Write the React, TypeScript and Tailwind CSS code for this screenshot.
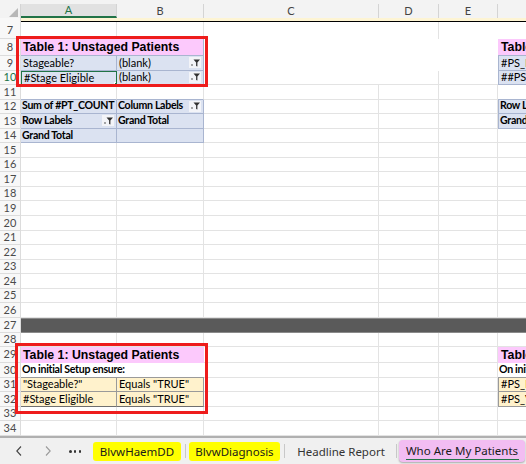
import React from 'react';

const cellFont = "font-['Lato','Liberation_Sans',sans-serif]";
const grid = 'shrink-0 border-r border-b border-[#e3e3e3]';
const A = 'w-[96px]';
const B = 'w-[87px]';
const C = 'w-[175px]';
const D = 'w-[60px]';
const E = 'w-[59px]';

// pivot / table styles
const piv = 'bg-[#dbe2f1] border-r border-b border-[#a9b5d0]';
const tan = 'bg-[#fff2cc] border-r border-b border-[#9a9a9a]';
const pink = 'bg-[#fcc9fc]';

const txt = `flex items-center overflow-hidden whitespace-nowrap pl-[2px] text-[11px] text-black ${cellFont}`;
const txtB = `flex items-center overflow-hidden whitespace-nowrap pl-[1px] text-[10.6px] font-bold tracking-[-0.3px] text-black ${cellFont}`;
const title = "flex items-center overflow-hidden whitespace-nowrap pl-[2px] text-[12.3px] font-bold text-black font-['Liberation_Sans',Arial,sans-serif]";

function FilterIcon() {
  return (
    <span className="ml-auto mr-[2px] flex h-[11px] w-[12px] shrink-0 items-center justify-center bg-[#f3f4f8]">
      <svg width="11" height="10" viewBox="0 0 11 10">
        <path d="M3.5 1.5 H10 L7.4 4.6 V8.6 L6.1 8 V4.6 Z" fill="#333" />
        <rect x="1" y="6.5" width="2" height="1" fill="#555" />
      </svg>
    </span>
  );
}

function Row({
  n,
  h,
  active,
  children,
}: {
  n: number;
  h: string;
  active?: boolean;
  children: React.ReactNode;
}) {
  return (
    <div className={`flex ${h}`}>
      <div
        className={`flex w-[21px] shrink-0 items-center justify-center border-r border-b border-[#dcdcdc] bg-[#f8f8f8] text-[11px] ${cellFont} ${
          active ? 'text-[#217346]' : 'text-[#4a4a4a]'
        }`}
      >
        {n}
      </div>
      {children}
    </div>
  );
}

function Blank({ n, h }: { n: number; h: string }) {
  return (
    <Row n={n} h={h}>
      <div className={`${grid} ${A}`} />
      <div className={`${grid} ${B}`} />
      <div className={`${grid} ${C}`} />
      <div className={`${grid} ${D}`} />
      <div className={`${grid} ${E}`} />
      <div className="min-w-0 flex-1 border-b border-[#e3e3e3]" />
    </Row>
  );
}

// column F is cut by the window edge, as in the sheet
function FCell({ text, cls, isBold }: { text: string; cls: string; isBold?: boolean }) {
  return <div className={`min-w-0 flex-1 ${isBold ? txtB : txt} ${cls}`}>{text}</div>;
}

const R = 'h-[14.56px]';

export default function App() {
  return (
    <div className="relative h-[464px] w-[526px] overflow-hidden bg-white">
      {/* column headers */}
      <div className="h-[4px] bg-[#f3f3f3]" />
      <div className={`flex h-[14px] text-[11px] ${cellFont}`}>
        <div className="relative w-[21px] shrink-0 border-r border-[#d4d4d4] bg-[#f3f3f3]">
          <div className="absolute bottom-[1px] right-[2px] h-0 w-0 border-b-[9px] border-l-[9px] border-b-[#b8b8b8] border-l-transparent" />
        </div>
        <div className="flex w-[96px] shrink-0 items-center justify-center border-r border-b-2 border-r-[#d4d4d4] border-b-[#217346] bg-[#e1e1e1] text-[#217346]">
          A
        </div>
        <div className="flex w-[87px] shrink-0 items-center justify-center border-r border-[#d4d4d4] bg-[#f3f3f3] text-[#444]">B</div>
        <div className="flex w-[175px] shrink-0 items-center justify-center border-r border-[#d4d4d4] bg-[#f3f3f3] text-[#444]">C</div>
        <div className="flex w-[60px] shrink-0 items-center justify-center border-r border-[#d4d4d4] bg-[#f3f3f3] text-[#444]">D</div>
        <div className="flex w-[59px] shrink-0 items-center justify-center border-r border-[#d4d4d4] bg-[#f3f3f3] text-[#444]">E</div>
        <div className="flex-1 bg-[#f3f3f3]" />
      </div>
      {/* frozen pane strip */}
      <div className="flex h-[4px]">
        <div className="w-[21px] shrink-0 border-r border-[#d4d4d4] bg-[#f8f8f8]" />
        <div className="flex-1 border-b border-black bg-[#fdf4d3]" />
      </div>

      {/* row 7 */}
      <Row n={7} h="h-[17px]">
        <div className={`${grid} ${A} border-b-[#a9b5d0]`} />
        <div className={`${grid} ${B} border-b-[#a9b5d0]`} />
        <div className={`shrink-0 ${C}`} />
        <div className={`shrink-0 border-r border-[#e3e3e3] ${D}`} />
        <div className={`shrink-0 ${E}`} />
        <div className="min-w-0 flex-1" />
      </Row>
      {/* row 8 */}
      <Row n={8} h="h-[17px]">
        <div className={`shrink-0 w-[183px] border-r border-b border-[#a9b5d0] ${pink} ${title}`}>Table 1: Unstaged Patients</div>
        <div className={`shrink-0 ${C}`} />
        <div className={`shrink-0 ${D}`} />
        <div className={`shrink-0 ${E}`} />
        <div className={`min-w-0 flex-1 border-b border-[#a9b5d0] ${pink} ${title} pl-[3px]`}>Table 1</div>
      </Row>
      {/* row 9 */}
      <Row n={9} h={R}>
        <div className={`shrink-0 ${A} ${piv} ${txt}`}>Stageable?</div>
        <div className={`shrink-0 ${B} ${piv} ${txt}`}>
          (blank)
          <FilterIcon />
        </div>
        <div className={`shrink-0 ${C}`} />
        <div className={`shrink-0 ${D}`} />
        <div className={`shrink-0 ${E}`} />
        <FCell text="#PS_PATIENT" cls="border-l border-b border-[#a9b5d0] bg-[#dbe2f1]" />
      </Row>
      {/* row 10 */}
      <Row n={10} h={R} active>
        <div className={`relative shrink-0 ${A} bg-[#dbe2f1] ${txt} border-[1.5px] border-[#217346]`}>
          #Stage Eligible
          <span className="absolute -bottom-[3px] -right-[3px] h-[5px] w-[5px] border border-white bg-[#217346]" />
        </div>
        <div className={`shrink-0 ${B} ${piv} ${txt}`}>
          (blank)
          <FilterIcon />
        </div>
        <div className={`shrink-0 border-b border-[#e3e3e3] ${C}`} />
        <div className={`shrink-0 border-r border-b border-[#e3e3e3] ${D}`} />
        <div className={`shrink-0 border-b border-[#e3e3e3] ${E}`} />
        <FCell text="##PS_VALID" cls="border-l border-b border-[#a9b5d0] bg-[#dbe2f1]" />
      </Row>
      {/* row 11 */}
      <Row n={11} h={R}>
        <div className={`${grid} ${A} border-b-[#a9b5d0]`} />
        <div className={`${grid} ${B} border-b-[#a9b5d0]`} />
        <div className={`${grid} ${C}`} />
        <div className={`${grid} ${D}`} />
        <div className={`${grid} ${E}`} />
        <div className="min-w-0 flex-1 border-b border-[#a9b5d0]" />
      </Row>
      {/* pivot */}
      <Row n={12} h={R}>
        <div className={`shrink-0 ${A} ${piv} ${txtB}`}>Sum of #PT_COUNT</div>
        <div className={`shrink-0 ${B} ${piv} ${txtB}`}>
          Column Labels
          <FilterIcon />
        </div>
        <div className={`${grid} ${C}`} />
        <div className={`${grid} ${D}`} />
        <div className={`${grid} ${E}`} />
        <FCell text="Row Labels" isBold cls="border-l border-b border-[#a9b5d0] bg-[#dbe2f1]" />
      </Row>
      <Row n={13} h={R}>
        <div className={`shrink-0 ${A} ${piv} ${txtB}`}>
          Row Labels
          <FilterIcon />
        </div>
        <div className={`shrink-0 ${B} ${piv} ${txtB}`}>Grand Total</div>
        <div className={`${grid} ${C}`} />
        <div className={`${grid} ${D}`} />
        <div className={`${grid} ${E}`} />
        <FCell text="Grand Total" isBold cls="border-l border-b border-[#a9b5d0] bg-[#dbe2f1]" />
      </Row>
      <Row n={14} h={R}>
        <div className={`shrink-0 ${A} ${piv} ${txtB}`}>Grand Total</div>
        <div className={`shrink-0 ${B} ${piv}`} />
        <div className={`${grid} ${C}`} />
        <div className={`${grid} ${D}`} />
        <div className={`${grid} ${E}`} />
        <div className="min-w-0 flex-1 border-b border-[#e3e3e3]" />
      </Row>
      {[15, 16, 17, 18, 19, 20, 21, 22, 23, 24, 25, 26].map((n) => (
        <Blank key={n} n={n} h={R} />
      ))}
      {/* row 27 dark band */}
      <Row n={27} h="h-[15px]">
        <div className="flex-1 border-y border-[#8a8a8a] bg-[#5a5a5a]" />
      </Row>
      <Blank n={28} h="h-[14px]" />
      <Row n={29} h="h-[16px]">
        <div className={`shrink-0 w-[183px] ${pink} ${title}`}>Table 1: Unstaged Patients</div>
        <div className={`${grid} ${C}`} />
        <div className={`${grid} ${D}`} />
        <div className={`${grid} ${E}`} />
        <div className={`min-w-0 flex-1 ${pink} ${title} pl-[3px]`}>Table 2</div>
      </Row>
      <Row n={30} h="h-[15px]">
        <div className={`shrink-0 w-[183px] border-b border-[#9a9a9a] ${txtB}`}>On initial Setup ensure:</div>
        <div className={`${grid} ${C}`} />
        <div className={`${grid} ${D}`} />
        <div className={`${grid} ${E}`} />
        <FCell text="On initial" isBold cls="border-b border-[#9a9a9a]" />
      </Row>
      <Row n={31} h="h-[14.5px]">
        <div className={`shrink-0 ${A} ${tan} ${txt}`}>"Stageable?"</div>
        <div className={`shrink-0 ${B} ${tan} ${txt}`}>Equals "TRUE"</div>
        <div className={`${grid} ${C}`} />
        <div className={`${grid} ${D}`} />
        <div className={`${grid} ${E}`} />
        <FCell text="#PS_PATIENT" cls="border-l border-b border-[#9a9a9a] bg-[#fff2cc]" />
      </Row>
      <Row n={32} h="h-[14.5px]">
        <div className={`shrink-0 ${A} ${tan} border-b-[#6f6f6f] ${txt}`}>#Stage Eligible</div>
        <div className={`shrink-0 ${B} ${tan} border-b-[#6f6f6f] ${txt}`}>Equals "TRUE"</div>
        <div className={`${grid} ${C}`} />
        <div className={`${grid} ${D}`} />
        <div className={`${grid} ${E}`} />
        <FCell text="#PS_VALID" cls="border-l border-b border-[#9a9a9a] bg-[#fff2cc]" />
      </Row>
      <Blank n={33} h="h-[14.5px]" />
      <Blank n={34} h="h-[14.5px]" />

      {/* sheet tabs */}
      <div className="flex h-[28px] items-center border-t-2 border-[#b0b0b0] bg-[#f0f0f0] pt-[1px] font-['Noto_Sans','Open_Sans',sans-serif] text-[11.5px]">
        <svg className="ml-[15px]" width="8" height="12" viewBox="0 0 8 12">
          <path d="M6 1.5 L1.8 6 L6 10.5" fill="none" stroke="#444" strokeWidth="1.1" />
        </svg>
        <svg className="ml-[21px]" width="8" height="12" viewBox="0 0 8 12">
          <path d="M2 1.5 L6.2 6 L2 10.5" fill="none" stroke="#9a9a9a" strokeWidth="1.1" />
        </svg>
        <span className="ml-[17px] flex w-[12px] justify-between">
          <span className="h-[2.5px] w-[2.5px] rounded-full bg-[#333]" />
          <span className="h-[2.5px] w-[2.5px] rounded-full bg-[#333]" />
          <span className="h-[2.5px] w-[2.5px] rounded-full bg-[#333]" />
        </span>
        <div className="ml-[12px] flex h-[19px] w-[88px] items-center justify-center rounded-[3px] bg-[#ffff00] text-[#1a1a1a]">
          BlvwHaemDD
        </div>
        <div className="ml-[4px] h-[14px] w-px bg-[#c8c8c8]" />
        <div className="ml-[3px] flex h-[19px] w-[91px] items-center justify-center rounded-[3px] bg-[#ffff00] text-[#1a1a1a]">
          BlvwDiagnosis
        </div>
        <div className="ml-[4px] h-[14px] w-px bg-[#c8c8c8]" />
        <div className="ml-[3px] flex w-[106px] justify-center text-[#333]">Headline Report</div>
        <div className="ml-[2px] h-[14px] w-px bg-[#c8c8c8]" />
        <div className="relative ml-[2px] flex h-[22px] w-[126px] items-center justify-center rounded-[4px] bg-[#f2bdf2] pb-[2px] text-[#1a1a1a] shadow-[0_1px_2px_rgba(0,0,0,0.3)]">
          Who Are My Patients
          <span className="absolute bottom-[2px] left-[7px] right-[6px] h-[1.5px] bg-[#217346]" />
        </div>
      </div>

      {/* highlight boxes */}
      <div className="pointer-events-none absolute left-[16px] top-[36px] h-[51px] w-[192px] border-[3px] border-[#ee1c1c]" />
      <div className="pointer-events-none absolute left-[15px] top-[343px] h-[71px] w-[193px] border-[3px] border-[#ee1c1c]" />
    </div>
  );
}
